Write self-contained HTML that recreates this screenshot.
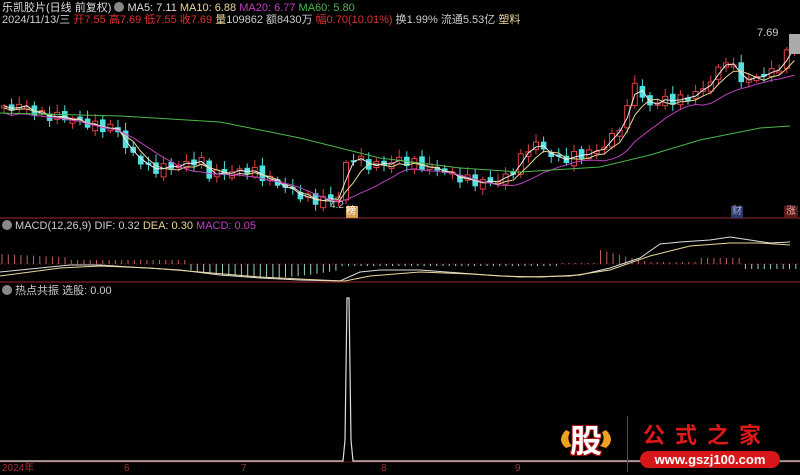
<!DOCTYPE html>
<html><head><meta charset="utf-8"><style>
html,body{margin:0;padding:0;background:#000;width:800px;height:475px;overflow:hidden}
body{font-family:"Liberation Sans","Noto Sans CJK SC",sans-serif;font-size:11px;position:relative}
.t{position:absolute;white-space:nowrap;line-height:12px}
svg{position:absolute;left:0;top:0}
</style></head><body>
<svg id="s" width="800" height="475" xmlns="http://www.w3.org/2000/svg">
<line x1="0" y1="218" x2="800" y2="218" stroke="#6a1c24" stroke-width="1.5"/>
<line x1="0" y1="282" x2="800" y2="282" stroke="#6a1c24" stroke-width="1.5"/>
<line x1="0" y1="264" x2="800" y2="264" stroke="#5a1a1a" stroke-dasharray="2,2"/>
<line x1="0" y1="462" x2="800" y2="462" stroke="#5a1a1a"/>
<g id="g"></g>
<polyline points="0,461 343,461 345,440 347,298 349,298 351,440 353,461 800,461" fill="none" stroke="#ddd" stroke-width="1.2"/>
<rect x="346" y="206" width="12" height="12" fill="#d9a050"/>
<rect x="731" y="206" width="12" height="12" fill="#2a3a6a"/>
<rect x="784" y="206" width="14" height="12" fill="#5a1a1a"/>
<rect x="789" y="34" width="11" height="20" fill="#aaa"/>
<path d="M566,430 Q556,440 566,448 L572,446 Q566,440 570,432Z M606,430 Q616,440 606,448 L600,446 Q606,440 602,432Z" fill="#f0a020"/>
</svg>
<div class="t" style="left:2px;top:2px;color:#ddd">乐凯胶片(日线 前复权) <span style="display:inline-block;width:10px;height:10px;border-radius:5px;background:#888;vertical-align:-1px"></span> MA5: 7.11 <span style="color:#e8d79a">MA10: 6.88</span> <span style="color:#c040c0">MA20: 6.77</span> <span style="color:#4cb84c">MA60: 5.80</span></div>
<div class="t" style="left:2px;top:14px;color:#ccc">2024/11/13/三 <span style="color:#e03030">开7.55 高7.69 低7.55 收7.69</span> <span style="color:#e8d79a">量</span>109862 额8430万 <span style="color:#e03030">幅0.70(10.01%)</span> 换1.99% 流通5.53亿 <span style="color:#e8d79a">塑料</span></div>
<div class="t" style="left:757px;top:27px;color:#ccc">7.69</div>
<div class="t" style="left:330px;top:200px;color:#ccc;font-size:10px">4.2</div>
<div class="t" style="left:346px;top:206px;color:#fff;font-size:10px">榜</div>
<div class="t" style="left:732px;top:206px;color:#aac;font-size:10px">财</div>
<div class="t" style="left:786px;top:206px;color:#eaa;font-size:10px">涨</div>
<div class="t" style="left:2px;top:220px;color:#ccc"><span style="display:inline-block;width:10px;height:10px;border-radius:5px;background:#888;vertical-align:-1px"></span> MACD(12,26,9) DIF: 0.32 <span style="color:#e8d79a">DEA: 0.30</span> <span style="color:#c040c0">MACD: 0.05</span></div>
<div class="t" style="left:2px;top:285px;color:#ccc"><span style="display:inline-block;width:10px;height:10px;border-radius:5px;background:#888;vertical-align:-1px"></span> 热点共振 选股: 0.00</div>
<div class="t" style="left:2px;top:463px;color:#a03030;font-size:10px">2024年</div>
<div class="t" style="left:124px;top:463px;color:#a03030;font-size:10px">6</div>
<div class="t" style="left:241px;top:463px;color:#a03030;font-size:10px">7</div>
<div class="t" style="left:381px;top:463px;color:#a03030;font-size:10px">8</div>
<div class="t" style="left:515px;top:463px;color:#a03030;font-size:10px">9</div>
<div class="t" style="left:570px;top:420px;color:#fff;font-size:32px;line-height:42px;font-weight:bold;text-shadow:1px 1px 0 #b01010,-1px -1px 0 #b01010,1px -1px 0 #b01010,-1px 1px 0 #b01010">股</div>
<div class="t" style="left:627px;top:416px;width:1px;height:56px;background:#a03030"></div>
<div class="t" style="left:643px;top:423px;color:#e01818;font-size:22px;line-height:26px;letter-spacing:10px;font-weight:bold">公式之家</div>
<div class="t" style="left:640px;top:451px;width:140px;height:17px;border-radius:9px;background:#d81818;color:#fff;font-size:13px;line-height:17px;text-align:center;font-weight:bold">www.gszj100.com</div>
<script>
var K=[[5,110],[20,105],[40,115],[70,118],[90,125],[120,130],[125,148],[140,160],[150,170],[180,165],[200,160],[210,175],[230,172],[250,170],[270,180],[290,190],[310,200],[330,200],[340,196],[346,165],[355,155],[365,165],[380,165],[400,160],[420,165],[440,170],[460,178],[480,183],[500,180],[510,175],[520,160],[530,145],[540,145],[550,155],[560,160],[580,155],[600,150],[610,140],[620,125],[630,105],[635,78],[642,100],[650,105],[660,100],[680,100],[700,92],[718,72],[724,55],[735,72],[745,82],[760,75],[775,72],[785,58],[795,40]];
function f(x){for(var i=0;i<K.length-1;i++){if(x<=K[i+1][0]){var a=K[i],b=K[i+1];return a[1]+(b[1]-a[1])*(x-a[0])/(b[0]-a[0]);}}return K[K.length-1][1];}
(function(){
var g=document.getElementById('g'),h='';var N=[],xs=[];
for(var x=4;x<=797;x+=7.6){xs.push(x);N.push(f(x)+Math.sin(x*1.3)*5);}
for(var i=0;i<N.length;i++){var x=xs[i],c=N[i],o=i?N[i-1]+Math.cos(i*2.1)*3:c+2;var up=c<o;var tp=Math.min(o,c),bh=Math.max(Math.abs(o-c),2);var col=up?'#e04040':'#50e0e0';
h+='<line x1="'+x+'" x2="'+x+'" y1="'+(tp-2-Math.abs(Math.sin(i*0.7))*6)+'" y2="'+(tp+bh+2+Math.abs(Math.cos(i))*4)+'" stroke="'+col+'"/>';
h+=up?'<rect x="'+(x-2.5)+'" y="'+tp+'" width="5" height="'+bh+'" fill="#000" stroke="'+col+'"/>':'<rect x="'+(x-2.8)+'" y="'+tp+'" width="5.6" height="'+bh+'" fill="'+col+'"/>';}
function ma(n,off,col){var p=[];for(var i=0;i<N.length;i++){var s=0,k=0;for(var j=Math.max(0,i-n+1);j<=i;j++){s+=N[j];k++}p.push(xs[i]+','+(s/k+off));}h+='<polyline points="'+p.join(' ')+'" fill="none" stroke="'+col+'"/>';}
ma(2,0,'#eee');ma(4,2,'#e8d79a');ma(9,7,'#c040c0');
h+='<polyline points="0,113 120,116 220,122 300,138 380,158 460,168 520,172 600,167 650,155 700,140 760,128 790,126" fill="none" stroke="#4cb84c"/>';
for(var x=2;x<798;x+=6.3){var v;if(x<70)v=-10+x*0.05;else if(x<190)v=-4;else if(x<340)v=6+Math.sin((x-190)/150*Math.PI)*8;else if(x<600)v=(x<560?2:-1);else if(x<700)v=-2;else if(x<740)v=-6;else v=5;
if(x>=600&&x<650)v=-14+(x-600)*0.25;
var col=v<0?'#c06060':'#9ad0c0';h+='<line x1="'+x+'" x2="'+x+'" y1="264" y2="'+(264+v)+'" stroke="'+col+'"/>';}
h+='<polyline points="0,272 40,268 70,265 100,265 130,267 180,270 220,275 260,278 300,280 340,281 360,272 380,270 420,270 460,273 500,276 540,277 580,275 610,268 640,258 660,244 680,242 710,240 730,237 750,240 770,243 790,242" fill="none" stroke="#ddd"/>';
h+='<polyline points="0,276 60,268 100,266 150,268 200,272 260,277 320,280 345,281 370,276 420,272 470,274 520,277 570,276 610,270 650,256 690,246 730,243 760,243 790,245" fill="none" stroke="#e8d79a"/>';
g.innerHTML=h;
})();
</script>
</body></html>
